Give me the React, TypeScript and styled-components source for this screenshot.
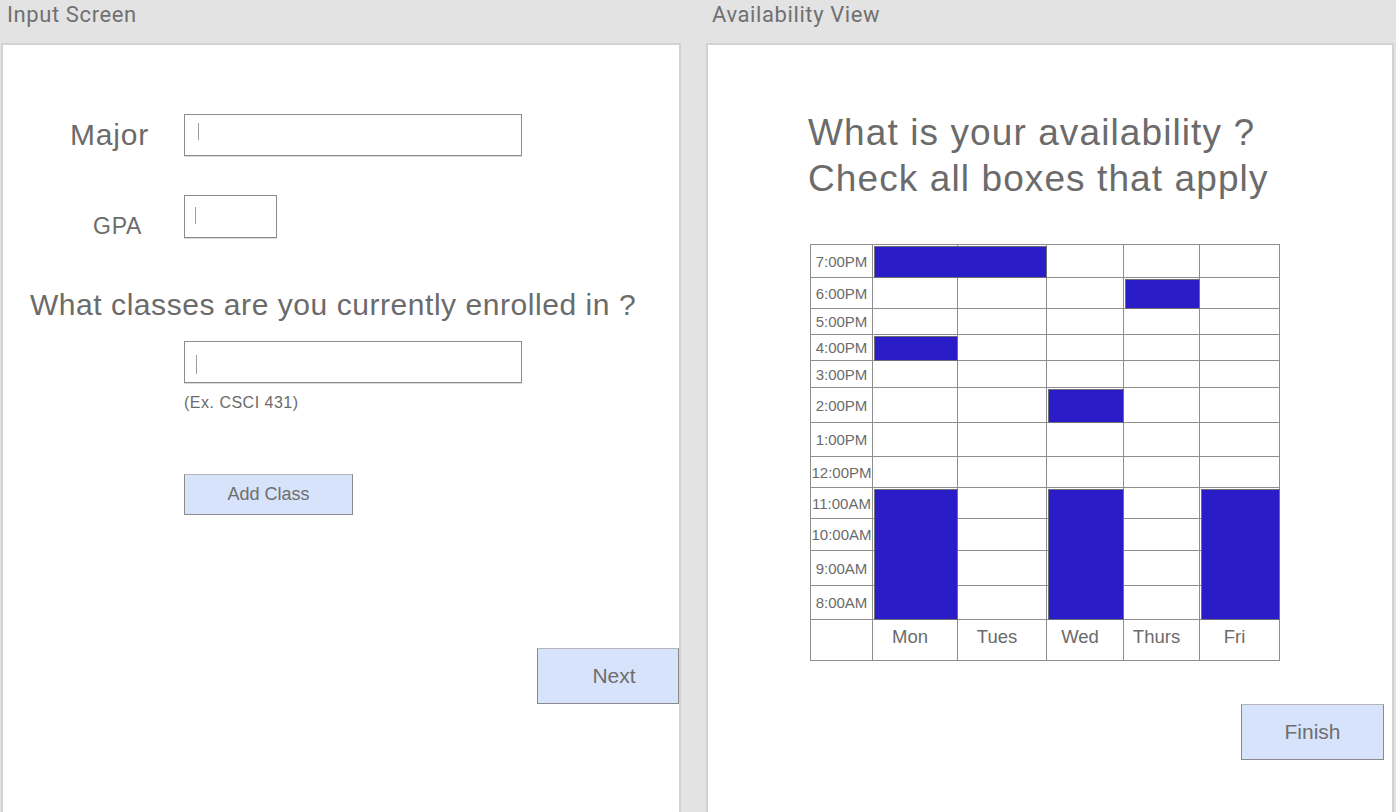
import React from 'react';
import styled, { createGlobalStyle } from 'styled-components';

const GlobalStyle = createGlobalStyle`
  html, body {
    margin: 0;
    padding: 0;
    background: #e3e3e3;
    overflow: hidden;
  }
  #root {
    height: 812px;
  }
`;

const Page = styled.div`
  display: flex;
  gap: 25px;
  height: 812px;
  padding-left: 1px;
  box-sizing: border-box;
  overflow: hidden;
  font-family: "Liberation Sans", Arial, sans-serif;
  color: #6b6b6b;
`;

const Column = styled.section<{ $width: number }>`
  display: flex;
  flex-direction: column;
  flex-shrink: 0;
  width: ${(p) => p.$width}px;
`;

const ScreenTitle = styled.h2`
  margin: 0;
  height: 43px;
  padding-left: 6px;
  box-sizing: border-box;
  font-family: Roboto, "Liberation Sans", sans-serif;
  font-weight: 400;
  font-size: 22px;
  line-height: 29px;
  letter-spacing: 0.6px;
  color: #707070;
`;

const Panel = styled.div`
  flex: 1;
  display: flex;
  flex-direction: column;
  min-height: 0;
  background: #ffffff;
  border: 2px solid #d2d2d2;
  border-bottom: none;
  box-sizing: border-box;
`;

/* ---------- Input screen ---------- */

const FieldRow = styled.div<{ $top: number; $align: 'center' | 'end' }>`
  display: flex;
  align-items: ${(p) => (p.$align === 'end' ? 'flex-end' : 'center')};
  margin-top: ${(p) => p.$top}px;
`;

const FieldLabel = styled.label<{ $indent: number; $size: number }>`
  width: 181px;
  flex-shrink: 0;
  box-sizing: border-box;
  padding-left: ${(p) => p.$indent}px;
  font-size: ${(p) => p.$size}px;
  line-height: 1;
  letter-spacing: 0.8px;
`;

const TextBox = styled.div<{ $width: number; $height: number; $offset?: number; $top?: number }>`
  position: relative;
  width: ${(p) => p.$width}px;
  height: ${(p) => p.$height}px;
  margin-left: ${(p) => p.$offset ?? 0}px;
  margin-top: ${(p) => p.$top ?? 0}px;
  box-sizing: border-box;
  background: #ffffff;
  border: 1px solid #8c8c8c;
  box-shadow: 0 1px 0 #dadada;
`;

const Caret = styled.span<{ $left: number; $top: number; $height: number }>`
  position: absolute;
  left: ${(p) => p.$left}px;
  top: ${(p) => p.$top}px;
  width: 1px;
  height: ${(p) => p.$height}px;
  background: #9c9c9c;
`;

const Question = styled.p`
  margin: 49px 0 0;
  padding-left: 27px;
  font-size: 30px;
  line-height: 36px;
  letter-spacing: 0.55px;
  white-space: nowrap;
`;

const Hint = styled.p`
  margin: 10px 0 0 181px;
  font-size: 16px;
  line-height: 20px;
  letter-spacing: 0.5px;
`;

const ActionButton = styled.button<{
  $width: number;
  $height: number;
  $size: number;
  $top: number;
  $left?: number;
  $right?: number;
  $end?: boolean;
  $shift?: number;
}>`
  align-self: ${(p) => (p.$end ? 'flex-end' : 'flex-start')};
  width: ${(p) => p.$width}px;
  height: ${(p) => p.$height}px;
  margin: ${(p) => p.$top}px ${(p) => p.$right ?? 0}px 0 ${(p) => p.$left ?? 0}px;
  padding: 0 0 0 ${(p) => p.$shift ?? 0}px;
  box-sizing: border-box;
  background: #d7e3fb;
  border: 1px solid #8a8a8a;
  border-top-color: #b6b6b6;
  font-family: "Liberation Sans", Arial, sans-serif;
  font-size: ${(p) => p.$size}px;
  color: #6e6e6e;
  cursor: pointer;
`;

/* ---------- Availability view ---------- */

const Heading = styled.h1`
  margin: 65px 0 0;
  padding-left: 100px;
  font-weight: 400;
  font-size: 37px;
  line-height: 46px;
  letter-spacing: 1.1px;
  color: #6b6b6b;
`;

const HeadingLine = styled.span`
  display: block;
  white-space: nowrap;
`;

const COLS = [62, 85, 89, 77, 76, 80];
const ROWS = [33, 31, 26, 26, 27, 35, 34, 31, 31, 32, 35, 34, 41];
const TIMES = [
  '7:00PM', '6:00PM', '5:00PM', '4:00PM', '3:00PM', '2:00PM',
  '1:00PM', '12:00PM', '11:00AM', '10:00AM', '9:00AM', '8:00AM',
];
const DAYS = ['Mon', 'Tues', 'Wed', 'Thurs', 'Fri'];

type Block = { row: number; col: number; rowSpan: number; colSpan: number };
const BLOCKS: Block[] = [
  { row: 1, col: 2, rowSpan: 1, colSpan: 2 },
  { row: 2, col: 5, rowSpan: 1, colSpan: 1 },
  { row: 4, col: 2, rowSpan: 1, colSpan: 1 },
  { row: 6, col: 4, rowSpan: 1, colSpan: 1 },
  { row: 9, col: 2, rowSpan: 4, colSpan: 1 },
  { row: 9, col: 4, rowSpan: 4, colSpan: 1 },
  { row: 9, col: 6, rowSpan: 4, colSpan: 1 },
];

const Schedule = styled.div`
  display: grid;
  grid-template-columns: ${COLS.map((c) => `${c}px`).join(' ')};
  grid-template-rows: ${ROWS.map((r) => `${r}px`).join(' ')};
  width: max-content;
  margin: 42px 0 0 102px;
  border-top: 1px solid #8e8e8e;
  border-left: 1px solid #8e8e8e;
  background: #ffffff;
`;

const Cell = styled.div<{ $row: number; $col: number; $kind: 'time' | 'day' | 'slot' }>`
  grid-row: ${(p) => p.$row};
  grid-column: ${(p) => p.$col};
  display: flex;
  justify-content: center;
  align-items: ${(p) => (p.$kind === 'day' ? 'flex-start' : 'center')};
  padding: ${(p) => (p.$kind === 'day' ? '8px 10px 0 0' : '0')};
  box-sizing: border-box;
  border-right: 1px solid #8e8e8e;
  border-bottom: 1px solid #8e8e8e;
  font-size: ${(p) => (p.$kind === 'day' ? 18.5 : 15)}px;
  line-height: 1;
  white-space: nowrap;
  color: #6b6b6b;
`;

const Busy = styled.div<Block>`
  grid-row: ${(p) => p.row} / span ${(p) => p.rowSpan};
  grid-column: ${(p) => p.col} / span ${(p) => p.colSpan};
  margin: 1px 0 0 1px;
  background: #2a1cc6;
  border: 1px solid #6f6f7c;
`;

function AvailabilityGrid() {
  const cells: React.ReactNode[] = [];
  ROWS.forEach((_, r) => {
    COLS.forEach((__, c) => {
      const isDayRow = r === ROWS.length - 1;
      let text = '';
      let kind: 'time' | 'day' | 'slot' = 'slot';
      if (isDayRow && c > 0) {
        text = DAYS[c - 1];
        kind = 'day';
      } else if (!isDayRow && c === 0) {
        text = TIMES[r];
        kind = 'time';
      }
      cells.push(
        <Cell key={`${r}-${c}`} $row={r + 1} $col={c + 1} $kind={kind}>
          {text}
        </Cell>
      );
    });
  });
  return (
    <Schedule>
      {cells}
      {BLOCKS.map((b, i) => (
        <Busy key={i} {...b} />
      ))}
    </Schedule>
  );
}

export default function App() {
  return (
    <>
      <GlobalStyle />
      <Page>
        <Column $width={680}>
          <ScreenTitle>Input Screen</ScreenTitle>
          <Panel>
            <FieldRow $top={69} $align="center">
              <FieldLabel $indent={67} $size={30}>Major</FieldLabel>
              <TextBox $width={338} $height={42}>
                <Caret $left={13} $top={8} $height={17} />
              </TextBox>
            </FieldRow>
            <FieldRow $top={39} $align="end">
              <FieldLabel $indent={90} $size={23}>GPA</FieldLabel>
              <TextBox $width={93} $height={43}>
                <Caret $left={10} $top={11} $height={17} />
              </TextBox>
            </FieldRow>
            <Question>What classes are you currently enrolled in ?</Question>
            <TextBox $width={338} $height={42} $offset={181} $top={18}>
              <Caret $left={11} $top={13} $height={19} />
            </TextBox>
            <Hint>(Ex. CSCI 431)</Hint>
            <ActionButton $width={169} $height={41} $size={18} $top={61} $left={181}>
              Add Class
            </ActionButton>
            <ActionButton $width={142} $height={56} $size={21} $top={133} $shift={12} $end>
              Next
            </ActionButton>
          </Panel>
        </Column>
        <Column $width={688}>
          <ScreenTitle>Availability View</ScreenTitle>
          <Panel>
            <Heading>
              <HeadingLine>What is your availability ?</HeadingLine>
              <HeadingLine>Check all boxes that apply</HeadingLine>
            </Heading>
            <AvailabilityGrid />
            <ActionButton $width={143} $height={56} $size={21} $top={43} $right={8} $end>
              Finish
            </ActionButton>
          </Panel>
        </Column>
      </Page>
    </>
  );
}
